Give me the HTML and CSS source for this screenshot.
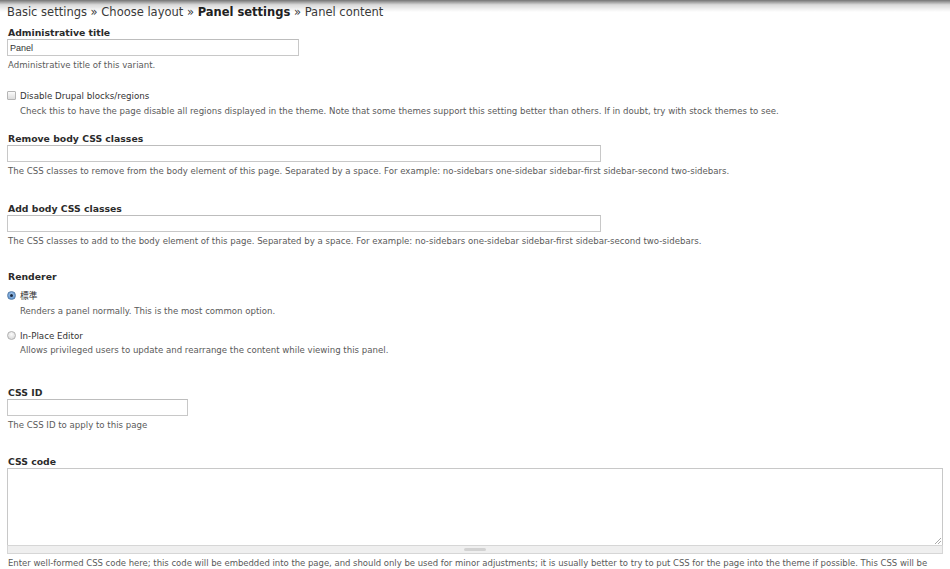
FILE: index.html
```html
<!DOCTYPE html>
<html>
<head>
<meta charset="utf-8">
<link rel="stylesheet" href="styles.css">
</head>
<body>
<div class="shadow"></div>
<div class="page">
  <div class="crumbs">Basic settings » Choose layout » <b>Panel settings</b> » Panel content</div>

  <div class="item m-title">
    <label class="lbl">Administrative title</label>
    <div class="input w292"><span class="val">Panel</span></div>
    <div class="desc">Administrative title of this variant.</div>
  </div>

  <div class="item m-check">
    <div class="opt"><span class="box"></span><span class="optlbl">Disable Drupal blocks/regions</span></div>
    <div class="desc ind">Check this to have the page disable all regions displayed in the theme. Note that some themes support this setting better than others. If in doubt, try with stock themes to see.</div>
  </div>

  <div class="item m-remove">
    <label class="lbl">Remove body CSS classes</label>
    <div class="input w594"></div>
    <div class="desc">The CSS classes to remove from the body element of this page. Separated by a space. For example: no-sidebars one-sidebar sidebar-first sidebar-second two-sidebars.</div>
  </div>

  <div class="item m-add">
    <label class="lbl">Add body CSS classes</label>
    <div class="input w594"></div>
    <div class="desc">The CSS classes to add to the body element of this page. Separated by a space. For example: no-sidebars one-sidebar sidebar-first sidebar-second two-sidebars.</div>
  </div>

  <div class="item m-renderer">
    <label class="lbl">Renderer</label>
    <div class="radios">
      <div class="opt first"><span class="radio on"></span><span class="optlbl cjk">標準</span></div>
      <div class="desc ind">Renders a panel normally. This is the most common option.</div>
      <div class="opt second"><span class="radio"></span><span class="optlbl">In-Place Editor</span></div>
      <div class="desc ind tight">Allows privileged users to update and rearrange the content while viewing this panel.</div>
    </div>
  </div>

  <div class="item m-id">
    <label class="lbl">CSS ID</label>
    <div class="input w181"></div>
    <div class="desc">The CSS ID to apply to this page</div>
  </div>

  <div class="item m-code">
    <label class="lbl">CSS code</label>
    <div class="textarea"><span class="resize"></span></div>
    <div class="grippie"><span class="handle"></span></div>
    <div class="desc wrap">Enter well-formed CSS code here; this code will be embedded into the page, and should only be used for minor adjustments; it is usually better to try to put CSS for the page into the theme if possible. This CSS will be filtered for safety so some CSS may not work.</div>
  </div>
</div>
</body>
</html>
```

FILE: styles.css
```css
html, body {
  margin: 0;
  padding: 0;
  background: #fff;
  overflow: hidden;
}
body {
  font-family: "DejaVu Sans", "Noto Sans CJK JP", sans-serif;
  color: #494949;
  height: 569px;
  position: relative;
}
.shadow {
  position: absolute;
  left: 0;
  right: 0;
  top: 0;
  height: 12px;
  background: linear-gradient(to bottom, rgba(0,0,0,0.55), rgba(0,0,0,0.15) 40%, rgba(0,0,0,0));
  pointer-events: none;
}
.page {
  padding: 0 7px;
}
.crumbs {
  font-size: 11.5px;
  color: #3a3a3a;
  padding-top: 4px;
  height: 16px;
  line-height: 16px;
  white-space: nowrap;
}
.crumbs b { font-weight: bold; color: #222; }

.m-title { margin-top: 7px; }
.m-check { margin-top: 19px; }
.m-remove { margin-top: 16px; }
.m-add { margin-top: 26px; }
.m-renderer { margin-top: 24px; }
.m-id { margin-top: 31px; }
.m-code { margin-top: 25px; }

.lbl {
  display: block;
  font-size: 9.3px;
  font-weight: bold;
  color: #2b2b2b;
  line-height: 11px;
  height: 11px;
  margin-bottom: 1px;
  padding-left: 1px;
  white-space: nowrap;
}
.input {
  height: 15px;
  border: 1px solid #c8c8c8;
  border-top-color: #bdbdbd;
  background: #fff;
  box-sizing: content-box;
  display: flex;
  align-items: center;
}
.w292 { width: 290px; }
.w594 { width: 592px; }
.w181 { width: 179px; }
.val {
  font-family: "Liberation Sans", sans-serif;
  font-size: 9px;
  color: #333;
  padding-left: 2px;
}
.desc {
  font-size: 8.6px;
  color: #5a5a5a;
  line-height: 11px;
  height: 11px;
  margin-top: 4px;
  padding-left: 1px;
  white-space: nowrap;
}
.desc.wrap {
  white-space: normal;
  height: auto;
  margin-top: 4px;
  font-size: 8.5px;
  letter-spacing: -0.02px;
}
.desc.ind { padding-left: 13px; margin-top: 5px; }
.desc.ind.tight { margin-top: 4px; }
.opt {
  display: flex;
  align-items: center;
  height: 11px;
}
.optlbl {
  font-size: 8.7px;
  color: #333;
  margin-left: 4px;
  white-space: nowrap;
}
.box {
  width: 9px;
  height: 9px;
  border: 1px solid #b5b5b5;
  border-radius: 1px;
  background: linear-gradient(#fbfbfb, #dcdcdc);
  box-sizing: border-box;
}
.radios .opt.first { margin-top: 8px; }
.radios .opt.second { margin-top: 13px; }
.radio {
  width: 9px;
  height: 9px;
  border-radius: 50%;
  border: 1px solid #b0b0b0;
  background: radial-gradient(circle at 50% 35%, #fafafa, #d3d3d3);
  box-sizing: border-box;
  position: relative;
}
.radio.on {
  border-color: #5a7fa8;
  background: radial-gradient(circle at 50% 40%, #a9c9ec, #4d86c6);
}
.radio.on::after {
  content: "";
  position: absolute;
  left: 2px;
  top: 2px;
  width: 3px;
  height: 3px;
  border-radius: 50%;
  background: #1c2c44;
}
.textarea {
  height: 76px;
  border: 1px solid #c8c8c8;
  border-bottom: none;
  background: #fff;
  position: relative;
}
.resize {
  position: absolute;
  right: 1px;
  bottom: 1px;
  width: 6px;
  height: 6px;
  background: linear-gradient(135deg, transparent 45%, #aaa 46%, #aaa 52%, transparent 53%, transparent 70%, #aaa 71%, #aaa 77%, transparent 78%);
}
.grippie {
  height: 7px;
  border: 1px solid #d6d6d6;
  background: #efefef;
  display: flex;
  justify-content: center;
  align-items: center;
}
.handle {
  width: 22px;
  height: 3px;
  background: #d2d2d2;
  border-radius: 2px;
}
```
